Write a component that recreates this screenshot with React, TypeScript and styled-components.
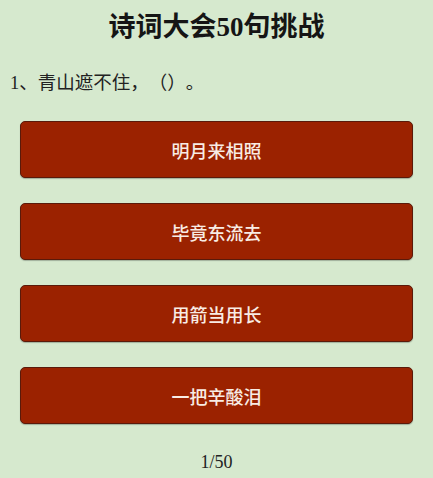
import styled, { createGlobalStyle } from "styled-components";

const Global = createGlobalStyle`
  html, body {
    margin: 0;
    padding: 0;
    background: #d6e9ce;
  }
`;

const options = ["明月来相照", "毕竟东流去", "用箭当用长", "一把辛酸泪"];

function App() {
  return (
    <Page>
      <Global />
      <Title>诗词大会50句挑战</Title>
      <Question>1、青山遮不住，（）。</Question>
      <Options>
        {options.map((o) => (
          <Option key={o}>{o}</Option>
        ))}
      </Options>
      <Counter>1/50</Counter>
    </Page>
  );
}

const Page = styled.div`
  width: 433px;
  height: 478px;
  box-sizing: border-box;
  display: flex;
  flex-direction: column;
  background: #d6e9ce;
  font-family: "Liberation Serif", "Noto Sans CJK SC", serif;
  color: #1a1a1a;
  text-spacing-trim: space-all;
`;

const Title = styled.h1`
  margin: 9px 0 0;
  text-align: center;
  font-size: 27px;
  line-height: 36px;
  font-weight: bold;
  color: #151515;
`;

const Question = styled.div`
  margin: 26px 0 0 10px;
  font-size: 18.5px;
  line-height: 24px;
  color: #222;
  text-spacing-trim: space-all;
`;

const Options = styled.div`
  display: flex;
  flex-direction: column;
  gap: 25px;
  margin: 26px 20px 0 20px;
`;

const Option = styled.button`
  height: 57px;
  border: 1px solid #5a1a0a;
  border-radius: 5px;
  background: #9b2200;
  color: #f8ece4;
  font-family: "Noto Sans CJK SC", sans-serif;
  font-size: 18px;
  font-weight: 500;
  box-shadow: 0 1px 1px rgba(0, 0, 0, 0.25);
  cursor: pointer;
`;

const Counter = styled.div`
  margin-top: 28px;
  text-align: center;
  font-size: 18px;
  color: #222;
`;

export default App;
